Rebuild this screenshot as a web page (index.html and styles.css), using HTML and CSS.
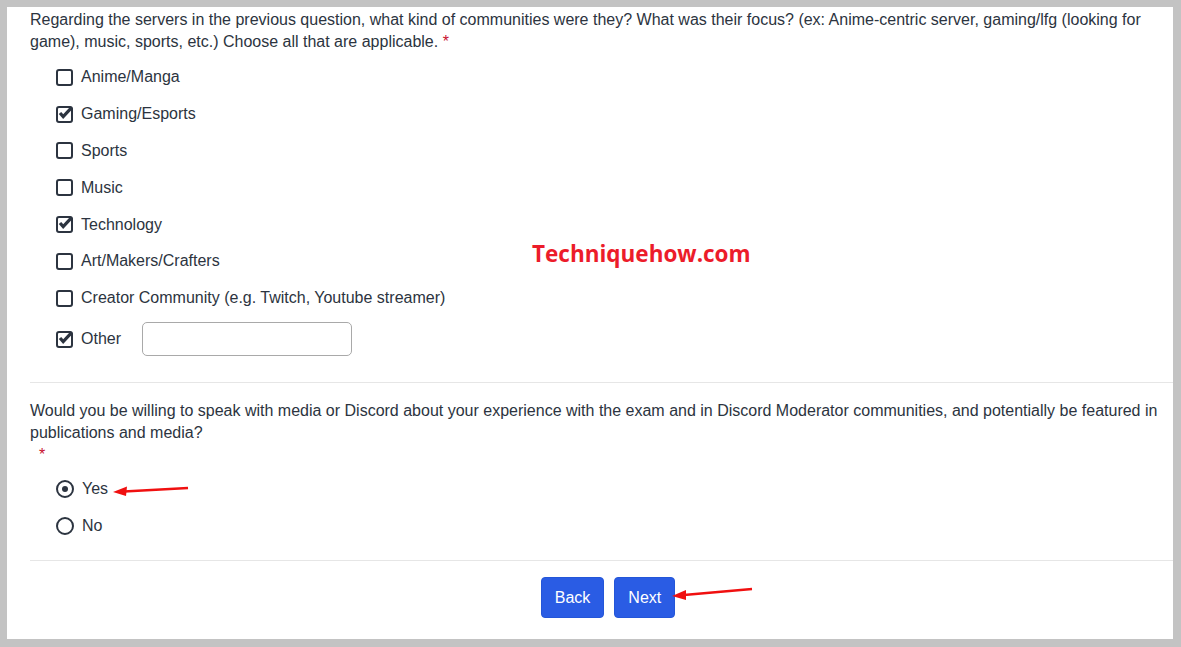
FILE: index.html
```html
<!DOCTYPE html>
<html>
<head>
<meta charset="utf-8">
<link rel="stylesheet" href="styles.css">
</head>
<body>
<div class="panel">
  <section class="question">
    <p class="qtext">Regarding the servers in the previous question, what kind of communities were they? What was their focus? (ex: Anime-centric server, gaming/lfg (looking for game), music, sports, etc.) Choose all that are applicable. <span class="req">*</span></p>
    <ul class="options">
      <li class="opt"><span class="cb"></span><span>Anime/Manga</span></li>
      <li class="opt"><span class="cb on"><svg viewBox="0 0 17 17"><path d="M4 8 L7.2 11.6 L15.8 2.4" fill="none" stroke="#2c3440" stroke-width="3.2"/></svg></span><span>Gaming/Esports</span></li>
      <li class="opt"><span class="cb"></span><span>Sports</span></li>
      <li class="opt"><span class="cb"></span><span>Music</span></li>
      <li class="opt"><span class="cb on"><svg viewBox="0 0 17 17"><path d="M4 8 L7.2 11.6 L15.8 2.4" fill="none" stroke="#2c3440" stroke-width="3.2"/></svg></span><span>Technology</span></li>
      <li class="opt"><span class="cb"></span><span>Art/Makers/Crafters</span></li>
      <li class="opt"><span class="cb"></span><span>Creator Community (e.g. Twitch, Youtube streamer)</span></li>
      <li class="opt other"><span class="cb on"><svg viewBox="0 0 17 17"><path d="M4 8 L7.2 11.6 L15.8 2.4" fill="none" stroke="#2c3440" stroke-width="3.2"/></svg></span><span>Other</span><input class="other-input" type="text"></li>
    </ul>
  </section>
  <section class="question q2">
    <p class="qtext">Would you be willing to speak with media or Discord about your experience with the exam and in Discord Moderator communities, and potentially be featured in publications and media?</p>
    <p class="req-line"><span class="req">*</span></p>
    <ul class="options radios">
      <li class="opt"><span class="rb on"></span><span>Yes</span></li>
      <li class="opt"><span class="rb"></span><span>No</span></li>
    </ul>
  </section>
  <div class="actions">
    <button class="btn">Back</button>
    <button class="btn">Next</button>
  </div>
  <div class="watermark">Techniquehow.com</div>
  <svg class="arrows" width="1181" height="647" viewBox="0 0 1181 647">
    <path d="M188 488 L124 491.5" stroke="#f01010" stroke-width="2.5" fill="none"/>
    <path d="M113 492 L127 486.5 L126 496 Z" fill="#f01010"/>
    <path d="M752 589 L684 595" stroke="#f01010" stroke-width="2.5" fill="none"/>
    <path d="M672 596 L686 590 L686 600 Z" fill="#f01010"/>
  </svg>
</div>
</body>
</html>
```
FILE: styles.css
```css
html, body {
  margin: 0;
  padding: 0;
}
body {
  background: #c3c3c3;
  font-family: "Liberation Sans", Arial, sans-serif;
  font-size: 16px;
  color: #2c3440;
  width: 1181px;
  height: 647px;
  overflow: hidden;
}
.panel {
  position: relative;
  margin: 7px 8px 0 7px;
  height: 632px;
  background: #fff;
  box-sizing: border-box;
  padding-top: 2px;
}
.question {
  margin-left: 23px;
  padding-right: 13px;
  border-bottom: 1px solid #e6e6e6;
}
.qtext {
  margin: 0;
  line-height: 22px;
}
.req {
  color: #c8102e;
}
.req-line {
  margin: 0 0 0 9px;
  line-height: 22px;
}
.options {
  list-style: none;
  margin: 6px 0 0 0;
  padding: 0 0 0 26px;
}
.opt {
  display: flex;
  align-items: center;
  height: 36.8px;
  gap: 8px;
}
.opt.other {
  height: 45px;
  margin-bottom: 20px;
}
.cb {
  width: 17px;
  height: 17px;
  box-sizing: border-box;
  border: 2px solid #2c3440;
  border-radius: 3px;
  position: relative;
  flex: none;
}
.cb svg {
  position: absolute;
  left: -2px;
  top: -3px;
  width: 17px;
  height: 17px;
}
.other-input {
  margin-left: 13px;
  width: 210px;
  height: 34px;
  box-sizing: border-box;
  border: 1px solid #a9a9a9;
  border-radius: 5px;
  outline: none;
}
.q2 {
  padding-top: 17px;
}
.radios {
  margin-top: 5px;
  margin-bottom: 16px;
}
.rb {
  width: 18px;
  height: 18px;
  box-sizing: border-box;
  border: 2px solid #2c3440;
  border-radius: 50%;
  flex: none;
  display: flex;
  align-items: center;
  justify-content: center;
}
.rb.on::after {
  content: "";
  width: 6px;
  height: 6px;
  border-radius: 50%;
  background: #2c3440;
}
.actions {
  display: flex;
  justify-content: center;
  gap: 10px;
  padding-left: 36px;
  margin-top: 16px;
}
.btn {
  background: #2a5ce4;
  color: #fff;
  border: 1px solid #2456d8;
  border-radius: 4px;
  height: 41px;
  padding: 0 13px;
  font-family: "Liberation Sans", Arial, sans-serif;
  font-size: 16px;
}
.watermark {
  position: absolute;
  left: 525px;
  top: 231px;
  font-family: "Open Sans", sans-serif;
  font-weight: 700;
  font-size: 22.5px;
  color: #ec1c2a;
}
.arrows {
  position: absolute;
  left: -7px;
  top: -7px;
  pointer-events: none;
}
```
